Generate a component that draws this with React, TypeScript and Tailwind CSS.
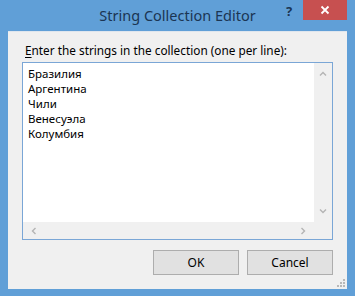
import React from 'react'

const countries = ['Бразилия', 'Аргентина', 'Чили', 'Венесуэла', 'Колумбия']

function Chevron({ dir }: { dir: 'up' | 'down' | 'left' | 'right' }) {
  const d = {
    up: 'M1 5.5 L4 2.5 L7 5.5',
    down: 'M1 2.5 L4 5.5 L7 2.5',
    left: 'M5.5 1 L2.5 4 L5.5 7',
    right: 'M2.5 1 L5.5 4 L2.5 7',
  }[dir]
  return (
    <svg width="8" height="8" viewBox="0 0 8 8" className="block">
      <path d={d} fill="none" stroke="#b4b4b4" strokeWidth="1.4" />
    </svg>
  )
}

export default function App() {
  return (
    <div
      className="w-[355px] h-[296px] bg-[#609fd7] flex flex-col overflow-hidden"
      style={{ fontFamily: '"Noto Sans", "Open Sans", sans-serif' }}
    >
      {/* Title bar */}
      <div className="relative h-[31px] shrink-0">
        <div className="absolute inset-x-0 top-[5px] text-center text-[14.5px] text-[#1b3553] leading-[20px]">
          String Collection Editor
        </div>
        <div className="absolute left-[286px] top-[3px] text-[13px] font-bold text-[#1b3553] leading-[16px]">?</div>
        <div className="absolute left-[303px] top-0 w-[44px] h-[20px] bg-[#c75050] flex items-center justify-center">
          <svg width="10" height="10" viewBox="0 0 10 10">
            <path d="M1.5 1.5 L8.5 8.5 M8.5 1.5 L1.5 8.5" stroke="#ffffff" strokeWidth="1.8" />
          </svg>
        </div>
      </div>

      {/* Client area */}
      <div className="relative mx-[8px] mb-[8px] flex-1 bg-[#f0f0f0] border-t border-[#dfe6ee] flex flex-col px-[14px] pb-[14px]">
        <div className="pl-[3px] pt-[10px] h-[30px] text-[11.8px] leading-[16px] text-black">
          <span className="underline underline-offset-2">E</span>nter the strings in the collection (one per line):
        </div>

        {/* Text box */}
        <div className="h-[178px] border border-[#7aa6d6] bg-white flex flex-col">
          <div className="flex flex-1 min-h-0">
            <div className="flex-1 pl-[5px] pt-[3px] text-[11.5px] leading-[15px] text-black">
              {countries.map((c) => (
                <div key={c} className="h-[15px]">{c}</div>
              ))}
            </div>
            <div className="w-[18px] bg-[#f0f0f0] flex flex-col items-center justify-between py-[7px]">
              <Chevron dir="up" />
              <Chevron dir="down" />
            </div>
          </div>
          <div className="h-[17px] flex">
            <div className="flex-1 bg-[#f0f0f0] flex items-center justify-between px-[7px]">
              <Chevron dir="left" />
              <Chevron dir="right" />
            </div>
            <div className="w-[18px] bg-[#f0f0f0]" />
          </div>
        </div>

        {/* Buttons */}
        <div className="flex justify-end gap-[8px] mt-[10px]">
          <button className="w-[86px] h-[25px] bg-[#e1e1e1] border border-[#adadad] text-[12px] text-black">OK</button>
          <button className="w-[86px] h-[25px] bg-[#e1e1e1] border border-[#adadad] text-[12px] text-black">Cancel</button>
        </div>

        {/* Resize grip */}
        <svg className="absolute right-[1px] bottom-[1px]" width="10" height="10" viewBox="0 0 10 10">
          <rect x="7" y="1" width="2" height="2" fill="#b8b8b8" />
          <rect x="4" y="4" width="2" height="2" fill="#b8b8b8" />
          <rect x="7" y="4" width="2" height="2" fill="#b8b8b8" />
          <rect x="1" y="7" width="2" height="2" fill="#b8b8b8" />
          <rect x="4" y="7" width="2" height="2" fill="#b8b8b8" />
          <rect x="7" y="7" width="2" height="2" fill="#b8b8b8" />
        </svg>
      </div>
    </div>
  )
}
